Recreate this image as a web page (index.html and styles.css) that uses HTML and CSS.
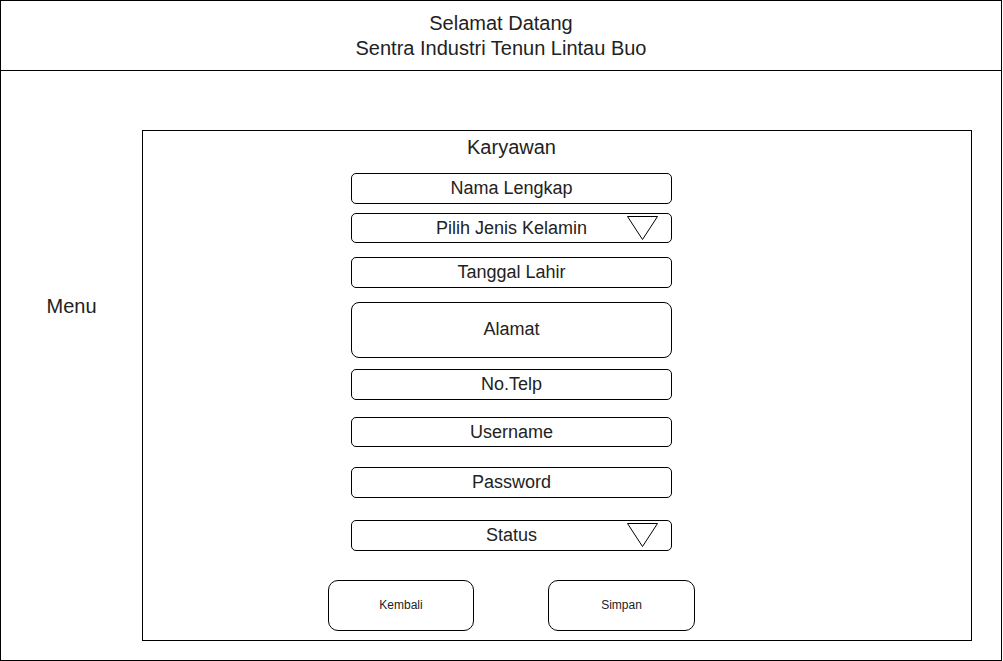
FILE: index.html
```html
<!DOCTYPE html>
<html lang="id">
<head>
<meta charset="utf-8">
<title>Karyawan</title>
<link rel="stylesheet" href="styles.css">
</head>
<body>
<div class="frame">
  <header class="header">
    <div class="title">Selamat Datang</div>
    <div class="title">Sentra Industri Tenun Lintau Buo</div>
  </header>
  <div class="main">
    <nav class="menu">Menu</nav>
    <section class="panel">
      <div class="panel-title">Karyawan</div>
      <div class="field f-nama">Nama Lengkap</div>
      <div class="field f-jk">Pilih Jenis Kelamin
        <svg class="caret" width="31" height="25" viewBox="0 0 31 25"><polygon points="0.5,0.5 30.5,0.5 15.5,23.5" fill="none" stroke="#000" stroke-width="1"/></svg>
      </div>
      <div class="field f-tgl">Tanggal Lahir</div>
      <div class="field field-tall f-alamat">Alamat</div>
      <div class="field f-telp">No.Telp</div>
      <div class="field f-user">Username</div>
      <div class="field f-pass">Password</div>
      <div class="field f-status">Status
        <svg class="caret" width="31" height="25" viewBox="0 0 31 25"><polygon points="0.5,0.5 30.5,0.5 15.5,23.5" fill="none" stroke="#000" stroke-width="1"/></svg>
      </div>
      <div class="actions">
        <div class="btn btn-back">Kembali</div>
        <div class="btn btn-save">Simpan</div>
      </div>
    </section>
  </div>
</div>
</body>
</html>
```

FILE: styles.css
```css
* { box-sizing: border-box; }
html, body { margin: 0; padding: 0; background: #fff; }
body {
  font-family: "Liberation Sans", Arial, Helvetica, sans-serif;
  color: #222;
}
.frame {
  width: 1002px;
  height: 661px;
  border: 1px solid #000;
  display: flex;
  flex-direction: column;
}
.header {
  height: 70px;
  flex: none;
  border-bottom: 1px solid #000;
  padding-top: 10px;
  text-align: center;
  font-size: 20px;
  line-height: 25px;
}
.main {
  flex: 1;
  display: grid;
  grid-template-columns: 141px 830px;
  align-items: start;
}
.menu {
  padding-top: 223px;
  text-align: center;
  font-size: 20px;
  line-height: 24px;
}
.panel {
  margin-top: 59px;
  height: 511px;
  border: 1px solid #000;
  padding: 4px 91px 0 0;
  display: flex;
  flex-direction: column;
  align-items: center;
}
.panel-title {
  font-size: 20px;
  line-height: 24px;
}
.field {
  position: relative;
  width: 321px;
  height: 31px;
  border: 1px solid #000;
  border-radius: 5px;
  font-size: 18px;
  display: flex;
  align-items: center;
  justify-content: center;
  padding-bottom: 1px;
}
.field-tall { height: 56px; border-radius: 8px; }
.caret { position: absolute; right: 13px; top: 2px; }
.f-nama { margin-top: 14px; }
.f-jk { margin-top: 9px; height: 30px; padding-bottom: 0; }
.f-tgl { margin-top: 14px; }
.f-alamat { margin-top: 14px; }
.f-telp { margin-top: 11px; }
.f-user { margin-top: 17px; height: 30px; padding-bottom: 0; }
.f-pass { margin-top: 20px; }
.f-status { margin-top: 22px; height: 31px; }
.actions {
  margin-top: 29px;
  display: flex;
  gap: 74px;
}
.btn {
  width: 146px;
  height: 51px;
  border: 1px solid #000;
  border-radius: 10px;
  font-size: 12px;
  display: flex;
  align-items: center;
  justify-content: center;
  padding-bottom: 2px;
}
.btn-save { width: 147px; }
```
